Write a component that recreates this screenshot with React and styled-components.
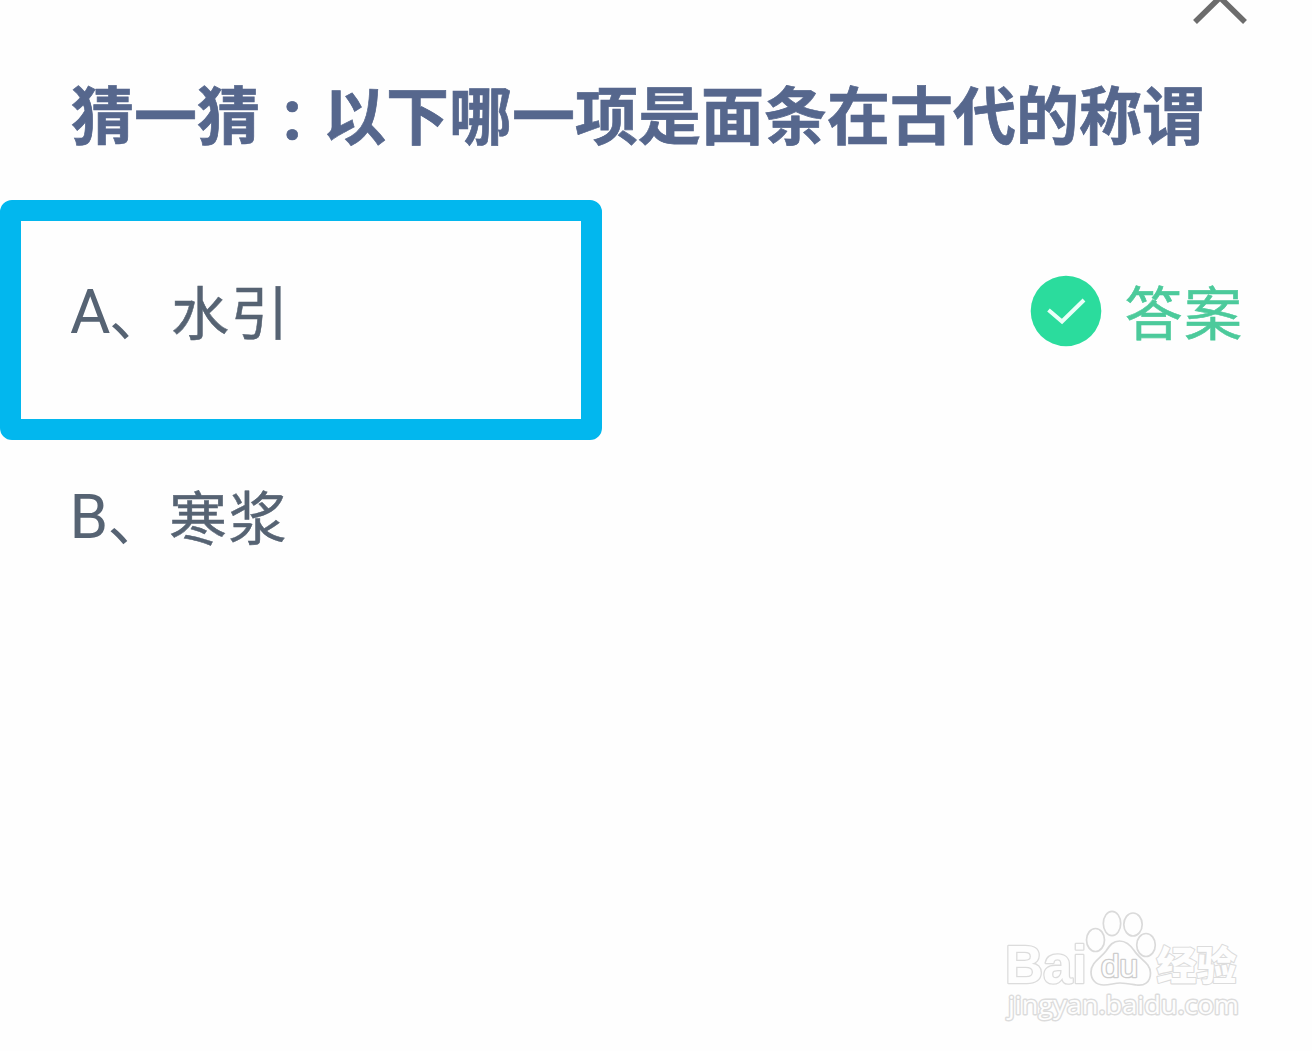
import React from 'react';
import styled, { createGlobalStyle } from 'styled-components';

const GlobalStyle = createGlobalStyle`
  * { box-sizing: border-box; }
  body { margin: 0; background: #fefefe; overflow: hidden; }
`;

const Page = styled.main`
  display: flex;
  flex-direction: column;
  width: 1312px;
  height: 1051px;
  overflow: hidden;
  background: #fefefe;
  font-family: 'Noto Sans CJK SC', sans-serif;
`;

const TopBar = styled.header`
  display: flex;
  justify-content: flex-end;
  height: 66px;
  padding-right: 64px;
`;

const Chevron = styled.svg`
  width: 56px;
  height: 28px;
`;

const Question = styled.h1`
  display: flex;
  align-items: baseline;
  margin: 0;
  height: 134px;
  padding-left: 71px;
  font-size: 63px;
  line-height: 92px;
  font-weight: 700;
  white-space: nowrap;
  color: #56678d;
  -webkit-text-stroke: 0.7px #56678d;
`;

const Colon = styled.span`
  width: 63px;
  padding-left: 18px;
  font-size: 57px;
`;

const OptionRow = styled.div`
  display: flex;
  justify-content: space-between;
  align-items: center;
  height: ${(p) => p.$height}px;
  padding-right: 70px;
`;

const OptionBox = styled.div`
  display: flex;
  align-items: center;
  width: ${(p) => (p.$selected ? 601.5 : 602)}px;
  height: 100%;
  padding: 0 0 ${(p) => p.$lift}px ${(p) => (p.$selected ? 49 : 69.5)}px;
  border: ${(p) => (p.$selected ? '21px solid #02b7ee' : 'none')};
  border-radius: 12px;
  color: #566373;
`;

const Letter = styled.span`
  width: ${(p) => p.$width}px;
  padding-top: 3px;
  font-family: Roboto, sans-serif;
  font-size: 62px;
  line-height: 80px;
`;

const Mark = styled.span`
  width: ${(p) => p.$width}px;
  padding-top: 2px;
  font-size: 58px;
  line-height: 80px;
`;

const OptionText = styled.span`
  font-size: 58px;
  line-height: 80px;
  letter-spacing: 1.5px;
  -webkit-text-stroke: 0.5px #566373;
`;

const Answer = styled.div`
  display: flex;
  align-items: center;
  gap: 22px;
  height: 80px;
  margin-bottom: 18px;
`;

const CheckBadge = styled.svg`
  width: 72px;
  height: 72px;
`;

const AnswerText = styled.span`
  padding-bottom: 2px;
  font-size: 58px;
  line-height: 78px;
  letter-spacing: 1.5px;
  margin-right: -1.5px;
  color: #4cca9b;
  -webkit-text-stroke: 0.6px #4cca9b;
`;

const Footer = styled.footer`
  display: flex;
  justify-content: flex-end;
  margin-top: auto;
  padding: 0 62px 21px 0;
`;

const Logo = styled.svg`
  width: 250px;
  height: 130px;
  overflow: visible;
`;

const Outlined = styled.text`
  font-family: ${(p) => p.$family || "'Open Sans', sans-serif"};
  font-size: ${(p) => p.$size}px;
  font-weight: ${(p) => p.$weight || 400};
  fill: #fefefe;
  stroke: ${(p) => p.$stroke || '#dcdcdc'};
  stroke-width: ${(p) => p.$line || 2.6}px;
  stroke-linejoin: round;
  paint-order: stroke;
`;

function Option({ letter, text, letterWidth, markWidth, height, selected, lift = 0, children }) {
  return (
    <OptionRow $height={height}>
      <OptionBox $selected={selected} $lift={lift}>
        <Letter $width={letterWidth}>{letter}</Letter>
        <Mark $width={markWidth}>、</Mark>
        <OptionText>{text}</OptionText>
      </OptionBox>
      {children}
    </OptionRow>
  );
}

function Watermark() {
  return (
    <Footer>
      <Logo viewBox="1000 900 250 130">
        <Outlined x="1005" y="983" $size={53} $weight={700} $family="'Liberation Sans', sans-serif" textLength="82" lengthAdjust="spacingAndGlyphs">Bai</Outlined>
        <g fill="#fefefe" stroke="#dadada" strokeWidth="1.7">
          <ellipse cx="1095.5" cy="940" rx="9" ry="11.5" />
          <ellipse cx="1112" cy="923.5" rx="8.7" ry="12.2" />
          <ellipse cx="1133" cy="924.5" rx="9.2" ry="11.5" />
          <ellipse cx="1146" cy="945" rx="9.3" ry="11.5" />
          <path d="M1119.500 941c7 0 11 4 15 10 5 8 16 12 16 22 0 10-7 13-14 12-6-1-11-2-16.500-2s-10 2-16 2c-8 0-13-5-13-13 0-10 10-14 15-21 4-6 7-10 13.500-10Z" />
        </g>
        <Outlined x="1101" y="977" $size={31} $weight={400} $family="'Liberation Sans', sans-serif" $stroke="#cdcdcd" $line={2.6} textLength="37" lengthAdjust="spacingAndGlyphs">du</Outlined>
        <Outlined x="1156.500" y="979.500" $size={40} $weight={900} $family="'Noto Sans CJK SC', sans-serif" $line={2.2}>经验</Outlined>
        <Outlined x="1008" y="1014" $size={26} $weight={400} $line={2.8} textLength="231" lengthAdjust="spacingAndGlyphs">jingyan.baidu.com</Outlined>
      </Logo>
    </Footer>
  );
}

export default function App() {
  return (
    <Page>
      <GlobalStyle />
      <TopBar>
        <Chevron viewBox="0 0 56 28" fill="none">
          <path d="M3 22 28 -2.5 53 22" stroke="#6c6c6c" strokeWidth="5.6" />
        </Chevron>
      </TopBar>
      <Question>
        <span>猜一猜</span>
        <Colon>：</Colon>
        <span>以下哪一项是面条在古代的称谓</span>
      </Question>
      <Option letter="A" text="水引" letterWidth={39} markWidth={62} height={240} selected lift={20}>
        <Answer>
          <CheckBadge viewBox="0 0 72 72">
            <circle cx="36" cy="36" r="35.3" fill="#2bdc9d" />
            <path d="m18.5 35 13.5 11.500L54 25" fill="none" stroke="#e9fff8" strokeWidth="4" />
          </CheckBadge>
          <AnswerText>答案</AnswerText>
        </Answer>
      </Option>
      <Option letter="B" text="寒浆" letterWidth={38} markWidth={61.5} height={155} lift={5} />
      <Watermark />
    </Page>
  );
}
